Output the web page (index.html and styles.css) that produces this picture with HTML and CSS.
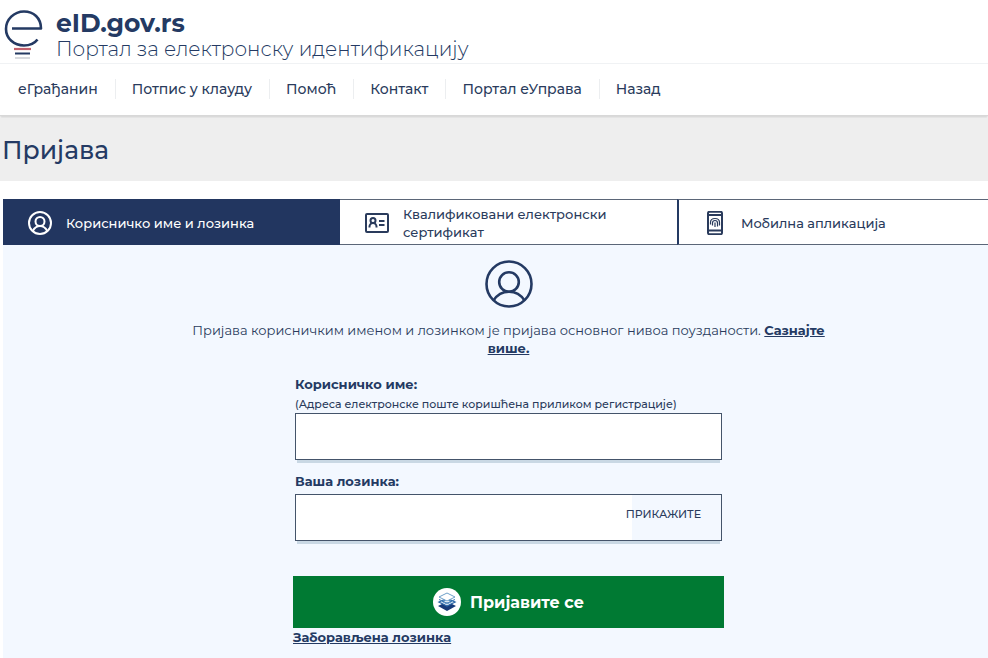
FILE: index.html
```html
<!DOCTYPE html>
<html lang="sr-Cyrl">

<head>
    <meta charset="UTF-8">
    <meta name="viewport" content="width=device-width, initial-scale=1.0">
    <title>eID.gov.rs - Пријава</title>
    <link rel="stylesheet" href="styles.css">
</head>

<body>
    <header class="header">
        <a href="#" class="brand">
            <svg class="brand-logo" viewBox="0 0 40 52" fill="none" aria-hidden="true">
                <path d="M8 19.500H37C37 9 29.500 2.500 20 2.500C10 2.500 2 10.500 2 20C2 29.500 10 36.500 20 36.500C26 36.500 30.500 34.500 33.500 30.500" stroke="#243a63" stroke-width="2.600" stroke-linejoin="round" />
                <path d="M10 40H27" stroke="#c2606c" stroke-width="2.200" />
                <path d="M11 44.500H26" stroke="#243a63" stroke-width="2" />
                <path d="M11 49H26" stroke="#d8dade" stroke-width="2" />
            </svg>
            <span class="brand-text">
                <strong class="brand-name">eID.gov.rs</strong>
                <span class="brand-tagline">Портал за електронску идентификацију</span>
            </span>
        </a>
        <nav class="nav">
            <a href="#">еГрађанин</a>
            <a href="#">Потпис у клауду</a>
            <a href="#">Помоћ</a>
            <a href="#">Контакт</a>
            <a href="#">Портал еУправа</a>
            <a href="#">Назад</a>
        </nav>
    </header>

    <div class="page-title">
        <h1>Пријава</h1>
    </div>

    <main class="container">
        <div class="tabs" role="tablist">
            <button type="button" class="tab active" role="tab" aria-selected="true">
                <svg class="tab-icon" viewBox="0 0 48 48" fill="none" stroke="currentColor" stroke-width="4" aria-hidden="true">
                    <circle cx="24" cy="24" r="22" />
                    <circle cx="24" cy="21" r="9" />
                    <path d="M9.500 40C13 33.500 18 30 24 30C30 30 35 33.500 38.500 40" />
                </svg>
                <span>Корисничко име и лозинка</span>
            </button>
            <button type="button" class="tab" role="tab" aria-selected="false">
                <svg class="tab-icon" viewBox="0 0 24 24" fill="none" stroke="currentColor" stroke-width="2" aria-hidden="true">
                    <rect x="1" y="3" width="22" height="18" rx="1" />
                    <circle cx="8" cy="9.500" r="2.500" />
                    <path d="M4.500 16.500V15.500C4.500 13.700 6 12 8 12C10 12 11.500 13.700 11.500 15.500V16.500M14 10H19.500M14 14H19.500" />
                </svg>
                <span>Квалификовани електронски сертификат</span>
            </button>
            <button type="button" class="tab" role="tab" aria-selected="false">
                <svg class="tab-icon" viewBox="0 0 24 24" fill="none" stroke="currentColor" aria-hidden="true">
                    <rect x="5" y="0.800" width="14" height="22.400" rx="1.500" stroke-width="2" />
                    <path d="M5 4H19M5 19.500H19" stroke-width="1.800" />
                    <path d="M7.500 13.500V11.500C7.500 9 9.500 7.500 12 7.500C14.500 7.500 16.500 9 16.500 11.500V14.500M9.500 14.500V12C9.500 10.500 10.500 9.500 12 9.500C13.500 9.500 14.500 10.500 14.500 12V15.500M12 11.500V16" stroke-width="1.200" />
                </svg>
                <span>Мобилна апликација</span>
            </button>
        </div>

        <section class="panel">
            <svg class="panel-icon" viewBox="0 0 48 48" fill="none" stroke="currentColor" stroke-width="2.600" aria-hidden="true">
                <circle cx="24" cy="24" r="22.500" />
                <circle cx="24" cy="22" r="9.800" />
                <path d="M8.500 40.500C12 35 17.500 31.800 24 31.800C30.500 31.800 36 35 39.500 40.500" />
            </svg>
            <p class="intro">Пријава корисничким именом и лозинком је пријава основног нивоа поузданости. <a href="#">Сазнајте више.</a></p>

            <form class="login-form">
                <div class="form-group">
                    <label for="username">Корисничко име:</label>
                    <span class="hint" id="username-hint">(Адреса електронске поште коришћена приликом регистрације)</span>
                    <div class="field">
                        <input type="text" id="username" aria-describedby="username-hint">
                    </div>
                </div>
                <div class="form-group password-group">
                    <label for="password">Ваша лозинка:</label>
                    <div class="field">
                        <input type="password" id="password">
                        <button type="button" class="show-btn">ПРИКАЖИТЕ</button>
                    </div>
                </div>
                <button type="submit" class="login-btn">
                    <svg class="login-icon" viewBox="0 0 28 28" fill="none" aria-hidden="true">
                        <circle cx="14" cy="14" r="14" fill="#fff" />
                        <path d="M5 18L14 13.500L23 18L14 23Z" fill="#173a78" />
                        <path d="M6 14L14 10.500L22 14L14 18Z" fill="#fff" stroke="#2864a5" stroke-width="1.300" />
                        <path d="M9 13.500L14 11.500L19 13.500L14 16Z" stroke="#4b84bb" />
                        <path d="M6 9L14 5L22 9L14 13Z" fill="#fff" stroke="#6d9fc9" />
                        <path d="M6 11.500L14 15L22 11.500" stroke="#3979b5" />
                    </svg>
                    <span>Пријавите се</span>
                </button>
                <a href="#" class="forgot-link">Заборављена лозинка</a>
            </form>
        </section>
    </main>
</body>

</html>
```
FILE: styles.css
```css
* {
    box-sizing: border-box;
}

body {
    margin: 0;
    min-height: 100vh;
    display: flex;
    flex-direction: column;
    overflow-x: hidden;
    background-color: #fff;
    color: #2a3b5c;
    font-family: Montserrat, Inter, "Noto Sans", sans-serif;
    font-size: 13px;
    line-height: 18px;
}

button,
input {
    font-family: inherit;
    color: inherit;
}

button {
    cursor: pointer;
}

.header {
    border-bottom: 1px solid #d8d8d8;
    box-shadow: 0 2px 2px #d8d8d8;
}

.brand {
    display: flex;
    align-items: flex-end;
    gap: 12px;
    padding: 9px 3px 2px 4px;
    border-bottom: 1px solid #f0f2f4;
    color: #243a63;
    text-decoration: none;
}

.brand-logo {
    width: 40px;
    height: 52px;
}

.brand-text {
    display: flex;
    flex-direction: column;
}

.brand-name {
    font-size: 25px;
    line-height: 28px;
    font-weight: 700;
}

.brand-tagline {
    font-size: 20px;
    line-height: 24px;
    font-weight: 300;
}

.nav {
    display: flex;
    align-items: center;
    padding: 15px 2px 16px;
}

.nav a {
    padding: 0 17px 0 16px;
    color: #2a3b5c;
    font-size: 14px;
    line-height: 20px;
    font-weight: 500;
    text-decoration: none;
}

.nav a + a {
    border-left: 1px solid #eceef0;
}

.page-title {
    margin-top: 2px;
    padding: 16px 2px 14px;
    background-color: #eee;
}

.page-title h1 {
    margin: 0;
    color: #243a63;
    font-size: 25px;
    line-height: 33px;
    font-weight: 500;
}

/* the login block runs on past the right edge */
.container {
    flex: 1;
    display: flex;
    flex-direction: column;
    margin: 18px -26px 0 3px;
}

.tabs {
    display: grid;
    grid-template-columns: repeat(3, 1fr);
}

.tab {
    display: flex;
    align-items: center;
    gap: 14px;
    min-height: 46px;
    padding: 5px 25px 3px;
    border: 1px solid #5b6678;
    border-left: 0;
    background-color: #fff;
    font-size: 13px;
    line-height: 18px;
    font-weight: 500;
    text-align: left;
}

.tab:last-child {
    padding-left: 24px;
    border-left: 2px solid #243a63;
}

.tab:nth-child(2) {
    border-right: 0;
}

.tab.active {
    border-color: #223660;
    background-color: #223660;
    color: #fff;
}

.tab-icon {
    flex: none;
    width: 24px;
    height: 24px;
}

.panel {
    flex: 1;
    display: flex;
    flex-direction: column;
    align-items: center;
    padding: 15px 20px 12px;
    background-color: #f3f8ff;
}

.panel-icon {
    width: 48px;
    height: 48px;
    color: #243a63;
}

.intro {
    max-width: 660px;
    margin: 13px 0 18px;
    font-weight: 400;
    text-align: center;
}

.intro a,
.forgot-link {
    color: #243a63;
    font-weight: 700;
}

.login-form {
    width: 100%;
    max-width: 431px;
}

.form-group {
    display: flex;
    flex-direction: column;
    padding: 0 2px;
}

.form-group label {
    color: #243a63;
    font-weight: 700;
}

.hint {
    padding-top: 2px;
    font-size: 11px;
    font-weight: 500;
}

.password-group {
    margin: 12px 0 35px;
}

.password-group label {
    margin-bottom: 4px;
}

.field {
    display: flex;
    height: 47px;
    border: 1px solid #44546a;
    background-color: #fff;
    box-shadow: 0 5px 0 -2px #c9d8e4;
}

.field input {
    flex: 1;
    min-width: 0;
    padding: 0 12px;
    border: 0;
    background: none;
    font-size: 16px;
}

.show-btn {
    display: flex;
    align-items: center;
    justify-content: flex-end;
    width: 89px;
    padding: 0 20px 7px 0;
    border: 0;
    background-color: #f3f8ff;
    font-size: 11px;
    font-weight: 500;
    white-space: nowrap;
}

.login-btn {
    display: flex;
    align-items: center;
    justify-content: center;
    gap: 9px;
    width: 100%;
    height: 52px;
    padding: 0;
    border: 0;
    background-color: #007a33;
    color: #fff;
    font-size: 16px;
    font-weight: 700;
}

.login-icon {
    width: 28px;
    height: 28px;
}
```
